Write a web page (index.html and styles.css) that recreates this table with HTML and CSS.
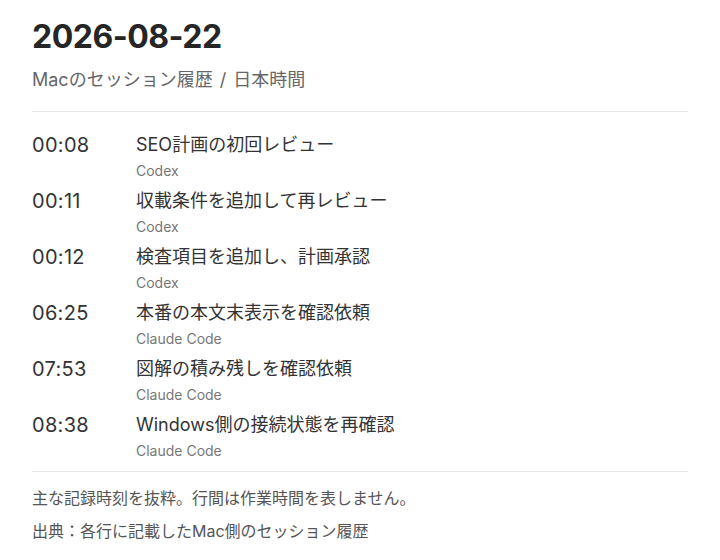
FILE: index.html
```html
<!DOCTYPE html>
<html lang="ja">
<head>
<meta charset="utf-8">
<title>2026-08-22</title>
<link rel="stylesheet" href="styles.css">
</head>
<body>
<main class="page">
  <header class="head">
    <h1 class="date">2026-08-22</h1>
    <p class="subtitle">Macのセッション履歴 / 日本時間</p>
  </header>
  <ul class="log">
    <li class="row"><span class="time">00:08</span><div class="entry"><span class="what">SEO計画の初回レビュー</span><span class="who">Codex</span></div></li>
    <li class="row"><span class="time">00:11</span><div class="entry"><span class="what">収載条件を追加して再レビュー</span><span class="who">Codex</span></div></li>
    <li class="row"><span class="time">00:12</span><div class="entry"><span class="what">検査項目を追加し、計画承認</span><span class="who">Codex</span></div></li>
    <li class="row"><span class="time">06:25</span><div class="entry"><span class="what">本番の本文末表示を確認依頼</span><span class="who">Claude Code</span></div></li>
    <li class="row"><span class="time">07:53</span><div class="entry"><span class="what">図解の積み残しを確認依頼</span><span class="who">Claude Code</span></div></li>
    <li class="row"><span class="time">08:38</span><div class="entry"><span class="what">Windows側の接続状態を再確認</span><span class="who">Claude Code</span></div></li>
  </ul>
  <footer class="notes">
    <p>主な記録時刻を抜粋。行間は作業時間を表しません。</p>
    <p>出典：各行に記載したMac側のセッション履歴</p>
  </footer>
</main>
</body>
</html>
```
FILE: styles.css
```css
html, body {
  margin: 0;
  padding: 0;
  background: #ffffff;
}
body {
  font-family: Inter, "Noto Sans CJK JP", sans-serif;
  color: #333333;
}
.page {
  padding: 17px 32px 0;
}
.head {
  border-bottom: 1px solid #e6e6e6;
  padding-bottom: 19px;
}
.date {
  margin: 0;
  font-size: 32px;
  line-height: 40px;
  font-weight: 700;
  letter-spacing: -0.5px;
  color: #262626;
}
.subtitle {
  margin: 11px 0 0;
  font-size: 18px;
  line-height: 24px;
  word-spacing: 2px;
  color: #666666;
}
.log {
  list-style: none;
  margin: 0;
  padding: 20px 0 7px;
  display: flex;
  flex-direction: column;
  gap: 4px;
  border-bottom: 1px solid #e6e6e6;
}
.row {
  display: grid;
  grid-template-columns: 104px 1fr;
}
.time {
  font-size: 20px;
  line-height: 26px;
  letter-spacing: 0.3px;
  color: #333333;
}
.entry {
  display: flex;
  flex-direction: column;
}
.what {
  font-size: 18px;
  line-height: 26px;
  color: #333333;
}
.who {
  font-size: 14px;
  line-height: 26px;
  color: #777777;
}
.notes {
  padding-top: 10px;
}
.notes p {
  margin: 0;
  font-size: 16px;
  line-height: 33px;
  color: #555555;
}
```
